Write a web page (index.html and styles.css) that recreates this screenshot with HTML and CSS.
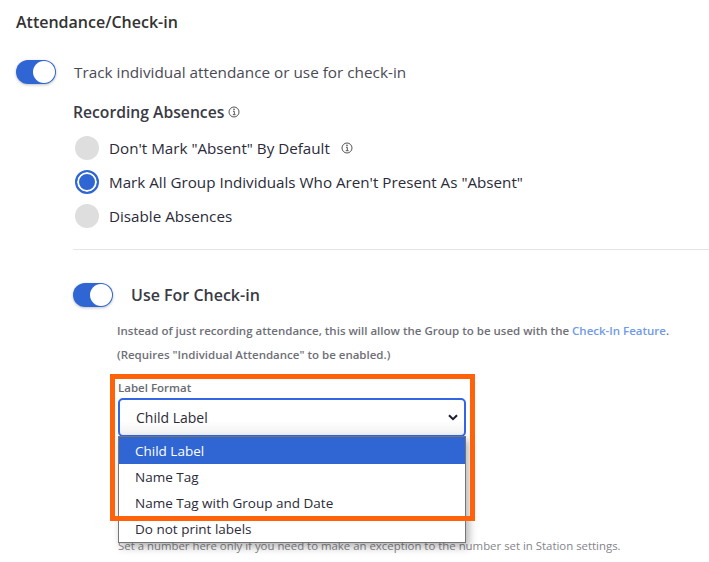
FILE: index.html
```html
<!DOCTYPE html>
<html lang="en">
<head>
  <meta charset="UTF-8">
  <meta name="viewport" content="width=device-width, initial-scale=1.0">
  <title>Attendance/Check-in</title>
  <link rel="stylesheet" href="styles.css">
</head>
<body>
  <main class="panel">
    <h2 class="panel-title">Attendance/Check-in</h2>

    <div class="track-row">
      <span class="toggle"></span>
      <span class="track-label">Track individual attendance or use for check-in</span>
    </div>

    <div class="track-body">
      <h3 class="absences-title">Recording Absences
        <svg class="info" viewBox="0 0 12 12"><circle cx="6" cy="6" r="5" fill="none" stroke="currentColor" stroke-width="1"/><path d="M5 5.3h1.3v3.2M4.8 8.7h2.8" fill="none" stroke="currentColor" stroke-width="1"/><circle cx="6" cy="3.4" r=".8" fill="currentColor"/></svg>
      </h3>

      <div class="radios">
        <div class="radio-row"><span class="radio"></span>Don't Mark "Absent" By Default
          <svg class="info info-radio" viewBox="0 0 12 12"><circle cx="6" cy="6" r="5" fill="none" stroke="currentColor" stroke-width="1"/><path d="M5 5.3h1.3v3.2M4.8 8.7h2.8" fill="none" stroke="currentColor" stroke-width="1"/><circle cx="6" cy="3.4" r=".8" fill="currentColor"/></svg>
        </div>
        <div class="radio-row"><span class="radio radio-on"></span>Mark All Group Individuals Who Aren't Present As "Absent"</div>
        <div class="radio-row"><span class="radio"></span>Disable Absences</div>
      </div>

      <hr class="divider">

      <div class="checkin-row">
        <span class="toggle"></span>
        <span class="checkin-label">Use For Check-in</span>
      </div>

      <div class="checkin-body">
        <p class="hint">Instead of just recording attendance, this will allow the Group to be used with the <a href="#">Check-In Feature</a>.</p>
        <p class="hint">(Requires "Individual Attendance" to be enabled.)</p>

        <div class="field">
          <label class="field-label">Label Format</label>
          <div class="select">
            <span>Child Label</span>
            <svg class="chevron" viewBox="0 0 10 7"><path d="M1 1.2l4 4 4-4" fill="none" stroke="currentColor" stroke-width="2"/></svg>
          </div>
          <ul class="options">
            <li class="option-active">Child Label</li>
            <li>Name Tag</li>
            <li>Name Tag with Group and Date</li>
            <li>Do not print labels</li>
          </ul>
        </div>
        <p class="copies-hint">Set a number here only if you need to make an exception to the number set in Station settings.</p>
      </div>
    </div>
  </main>
  <div class="highlight"></div>
</body>
</html>
```

FILE: styles.css
```css
html, body {
  margin: 0;
  background: #fff;
}

body {
  font-family: "Open Sans", sans-serif;
  color: #2b2b3a;
  width: 709px;
  height: 562px;
  overflow: hidden;
  position: relative;
}

.panel {
  padding: 12px 0 0 16px;
}

.panel-title {
  margin: 0;
  font-size: 16px;
  line-height: 20px;
  font-weight: 600;
  color: #333;
}

.track-row {
  display: flex;
  align-items: center;
  gap: 18px;
  margin-top: 28px;
}

.toggle {
  display: block;
  box-sizing: border-box;
  width: 40px;
  height: 24px;
  border-radius: 12px;
  background: #2f66d3;
  position: relative;
  box-shadow: 0 1px 3px rgba(0, 0, 0, .25);
  flex: none;
}

.toggle::after {
  content: "";
  position: absolute;
  right: 1px;
  top: 1px;
  width: 22px;
  height: 22px;
  border-radius: 50%;
  background: #fff;
}

.track-label {
  font-size: 15.3px;
  line-height: 24px;
  color: #4a4a55;
}

.track-body {
  margin-left: 57px;
}

.absences-title {
  margin: 17px 0 0;
  font-size: 15.7px;
  line-height: 22px;
  font-weight: 600;
  color: #3a3a45;
  display: flex;
  align-items: center;
  gap: 4px;
}

.info {
  width: 12px;
  height: 12px;
  color: #555;
}

.info-radio {
  margin-left: 11px;
}

.radios {
  margin-top: 13px;
  display: flex;
  flex-direction: column;
  gap: 10px;
}

.radio-row {
  display: flex;
  align-items: center;
  font-size: 15.2px;
  line-height: 24px;
  margin-left: 2px;
  color: #2b2b3a;
}

.radio {
  box-sizing: border-box;
  width: 24px;
  height: 24px;
  border-radius: 50%;
  background: #dedede;
  margin-right: 10px;
  flex: none;
}

.radio-on {
  background: #2f66d3;
  border: 2px solid #2f66d3;
  box-shadow: inset 0 0 0 2px #fff;
}

.divider {
  border: 0;
  border-top: 1px solid #e6e6e6;
  margin: 21px 0 0;
}

.checkin-row {
  display: flex;
  align-items: center;
  gap: 18px;
  margin-top: 33px;
}

.checkin-label {
  font-size: 16px;
  line-height: 24px;
  font-weight: 600;
  color: #3a3a45;
}

.checkin-body {
  margin-left: 44px;
  position: relative;
}

.hint {
  margin: 16px 0 0;
  font-size: 11.5px;
  line-height: 16px;
  font-weight: 600;
  color: #6f6f78;
}

.hint + .hint {
  margin-top: 8px;
}

.hint a {
  color: #6f9ae8;
  text-decoration: none;
}

.field {
  margin: 17px 0 0 1px;
  width: 348px;
  position: relative;
}

.field-label {
  display: block;
  font-size: 11.5px;
  line-height: 15px;
  font-weight: 600;
  color: #6a6a72;
}

.select {
  box-sizing: border-box;
  height: 39px;
  margin-top: 3px;
  border: 2px solid #3366e6;
  border-radius: 5px;
  padding: 0 6px 0 16px;
  display: flex;
  align-items: center;
  justify-content: space-between;
  font-size: 14px;
  background: linear-gradient(#fff 60%, #f1f1f1);
}

.chevron {
  width: 10px;
  height: 7px;
  color: #1c1c2c;
}

.options {
  list-style: none;
  margin: 0;
  padding: 0;
  position: absolute;
  left: 0;
  right: 0;
  top: 56px;
  z-index: 2;
  box-sizing: border-box;
  height: 107px;
  background: #fff;
  border: 1px solid #767676;
  box-shadow: 3px 4px 8px rgba(0, 0, 0, .3);
  font-size: 13.5px;
}

.options li {
  height: 26px;
  line-height: 26px;
  padding-left: 16px;
}

.options .option-active {
  height: 27px;
  line-height: 28px;
  background: #2f66d3;
  color: #fff;
}

.copies-hint {
  margin: 101px 0 0 1px;
  font-size: 11.4px;
  line-height: 16px;
  color: #85858c;
  white-space: nowrap;
}

/* annotation drawn over the screenshot */
.highlight {
  position: absolute;
  left: 110px;
  top: 374px;
  width: 365px;
  height: 147px;
  box-sizing: border-box;
  border: 5px solid #ff6209;
  z-index: 3;
}
```
